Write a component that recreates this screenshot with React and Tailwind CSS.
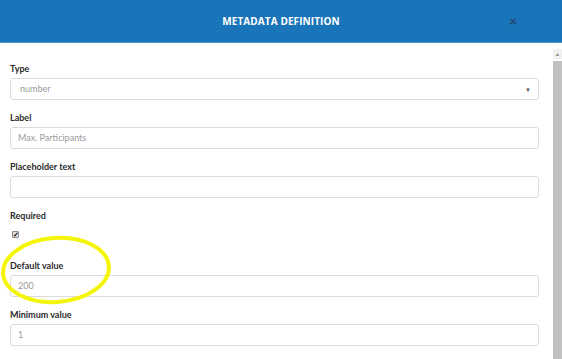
import React from "react";

const labelCls = "h-[14px] flex items-center text-[9px] font-bold text-[#2b2b2b] leading-none";
const inputCls = "h-[22px] rounded-[3px] border border-[#dcdcdc] flex items-center text-[9px] text-[#9a9a9a] bg-white";

function Field({ label, value, select }) {
  return (
    <div className="flex flex-col mb-[10px]">
      <div className={labelCls}>{label}</div>
      <div className={inputCls + " mt-[3px] justify-between " + (select ? "pl-[9px] pr-[7px]" : "px-[7px]")}>
        <span>{value}</span>
        {select && <span className="text-[6px] text-[#555]">▼</span>}
      </div>
    </div>
  );
}

export default function App() {
  return (
    <div
      className="relative w-[562px] h-[359px] overflow-hidden bg-white flex flex-col"
      style={{ fontFamily: "Lato, 'Open Sans', 'Liberation Sans', sans-serif" }}
    >
      <div className="h-[43px] shrink-0 bg-[#1a74ba] border-b border-[#4c9bd8] grid grid-cols-[1fr_auto_1fr] items-center">
        <div />
        <div
          className="text-white text-[10px] font-bold tracking-[0.1px]"
          style={{ fontFamily: "'Open Sans', 'Liberation Sans', sans-serif" }}
        >
          METADATA DEFINITION
        </div>
        <div className="flex justify-end pr-[45px]">
          <span className="text-[#24466c] text-[14px] font-bold leading-none">×</span>
        </div>
      </div>
      <div className="flex flex-1 min-h-0">
        <div className="flex-1 pl-[10px] pr-[14px] pt-[18px]">
          <Field label="Type" value="number" select />
          <Field label="Label" value="Max. Participants" />
          <Field label="Placeholder text" value="" />
          <div className="flex flex-col">
            <div className={labelCls}>Required</div>
            <div className="mt-[9px] ml-[2px] w-[7px] h-[7px] rounded-[1px] bg-[#dedede] border border-[#8a8a8a] flex items-center justify-center text-[7px] font-bold leading-none text-[#111]">
              ✓
            </div>
            <div className="h-[20px]" />
          </div>
          <Field label="Default value" value="200" />
          <Field label="Minimum value" value="1" />
        </div>
        <div className="w-[9px] shrink-0 flex flex-col mt-[6px]">
          <div className="h-[10px] bg-[#f1f1f1] flex items-center justify-center">
            <span className="text-[5px] text-[#888] leading-none">▲</span>
          </div>
          <div className="flex-1 bg-[#c1c1c1] mt-[2px]" />
        </div>
      </div>
      <svg className="absolute left-0 top-0 pointer-events-none" width="562" height="359">
        <ellipse cx="56" cy="270" rx="53" ry="32" fill="none" stroke="#f5f50a" strokeWidth="4" transform="rotate(-4 56 270)" />
      </svg>
    </div>
  );
}
